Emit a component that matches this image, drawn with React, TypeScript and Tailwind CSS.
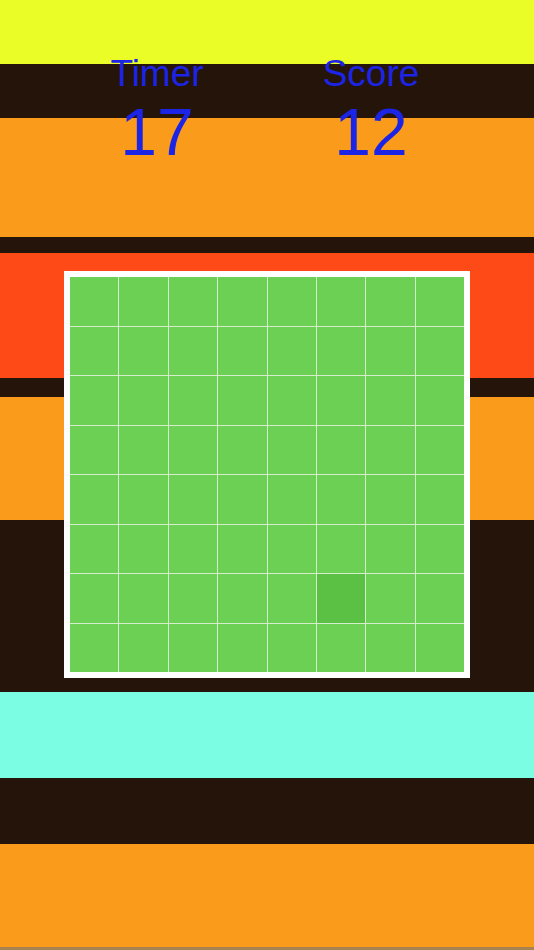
import React from "react";

export default function App() {
  const cells = Array.from({ length: 64 }, (_, i) => i);
  return (
    <div className="relative w-[534px] h-[950px] overflow-hidden" style={{ fontFamily: '"Liberation Sans", Arial, sans-serif' }}>
      <div className="absolute inset-0 flex flex-col">
        <div className="h-[64px] bg-[#ebfd26]" />
        <div className="h-[54px] bg-[#241409]" />
        <div className="h-[119px] bg-[#fb9b1c]" />
        <div className="h-[16px] bg-[#241409]" />
        <div className="h-[125px] bg-[#fd4a17]" />
        <div className="h-[19px] bg-[#241409]" />
        <div className="h-[123px] bg-[#fb9b1c]" />
        <div className="h-[172px] bg-[#241409]" />
        <div className="h-[86px] bg-[#7afde3]" />
        <div className="h-[66px] bg-[#241409]" />
        <div className="h-[103px] bg-[#fb9b1c]" />
        <div className="flex-1 bg-[#a8834f]" />
      </div>
      <div className="relative flex flex-col">
        <div className="grid grid-cols-[214px_214px] pl-[50px] pt-[55px] text-[#1c24e6]">
          <div className="flex flex-col items-center">
            <div className="text-[37px] leading-[37px]">Timer</div>
            <div className="text-[66px] leading-[66px] mt-[7px]">17</div>
          </div>
          <div className="flex flex-col items-center">
            <div className="text-[37px] leading-[37px]">Score</div>
            <div className="text-[66px] leading-[66px] mt-[7px]">12</div>
          </div>
        </div>
        <div className="ml-[64px] mt-[106px] w-[406px] h-[407px] bg-white p-[6px]">
          <div className="grid grid-cols-8 grid-rows-8 gap-px bg-[#d4edcc] w-full h-full">
            {cells.map((i) => (
              <div key={i} className={i === 53 ? "bg-[#5ac145]" : "bg-[#6cd055]"} />
            ))}
          </div>
        </div>
      </div>
    </div>
  );
}
